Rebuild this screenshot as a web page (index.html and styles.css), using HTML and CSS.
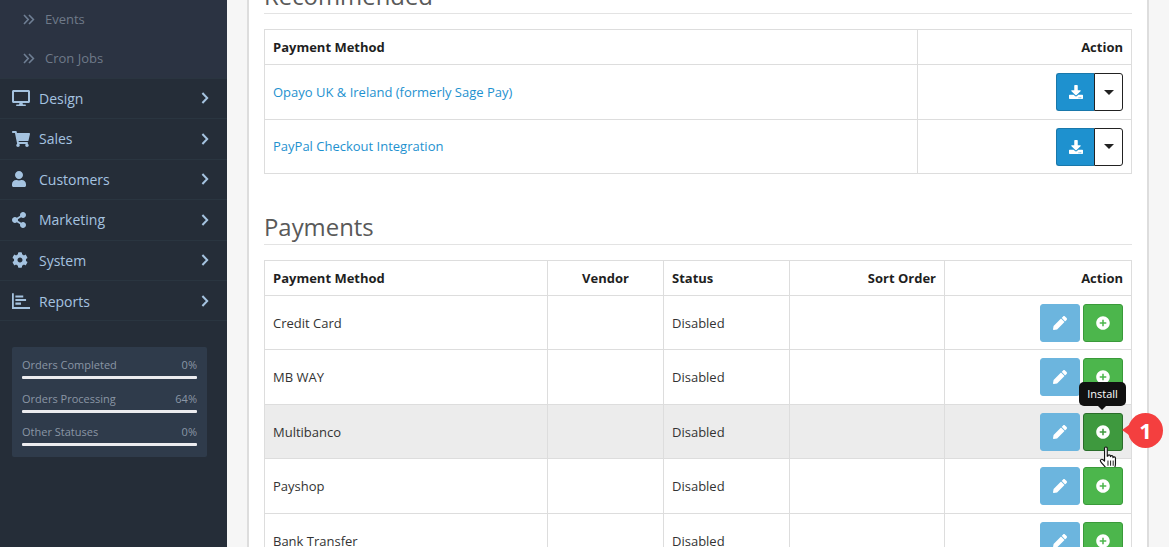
FILE: index.html
```html
<!DOCTYPE html>
<html lang="en">
<head>
<meta charset="utf-8">
<title>Payments</title>
<link rel="stylesheet" href="styles.css">
</head>
<body>
<svg class="defs" width="0" height="0" aria-hidden="true">
  <symbol id="i-desktop" viewBox="0 0 576 512" preserveAspectRatio="xMinYMid meet"><path d="M528 0H48C21.5 0 0 21.5 0 48v320c0 26.5 21.5 48 48 48h192l-16 48h-72c-13.3 0-24 10.7-24 24s10.7 24 24 24h272c13.3 0 24-10.7 24-24s-10.7-24-24-24h-72l-16-48h192c26.5 0 48-21.5 48-48V48c0-26.5-21.5-48-48-48zm-16 352H64V64h448v288z"/></symbol>
  <symbol id="i-cart" viewBox="0 0 576 512" preserveAspectRatio="xMinYMid meet"><path d="M528.12 301.319l47.273-208C578.806 78.301 567.391 64 551.99 64H159.208l-9.166-44.81C147.758 8.021 137.93 0 126.529 0H24C10.745 0 0 10.745 0 24v16c0 13.255 10.745 24 24 24h69.883l70.248 343.435C147.325 417.1 136 435.222 136 456c0 30.928 25.072 56 56 56s56-25.072 56-56c0-15.674-6.447-29.835-16.824-40h209.647C430.447 426.165 424 440.326 424 456c0 30.928 25.072 56 56 56s56-25.072 56-56c0-22.172-12.888-41.332-31.579-50.405l5.517-24.276c3.413-15.018-8.002-29.319-23.403-29.319H218.117l-6.545-32h293.145c11.206 0 20.92-7.754 23.403-18.681z"/></symbol>
  <symbol id="i-user" viewBox="0 0 448 512" preserveAspectRatio="xMinYMid meet"><path d="M224 256c70.7 0 128-57.3 128-128S294.7 0 224 0 96 57.3 96 128s57.3 128 128 128zm89.6 32h-16.7c-22.2 10.2-46.9 16-72.9 16s-50.6-5.8-72.9-16h-16.7C60.2 288 0 348.2 0 422.4V464c0 26.5 21.5 48 48 48h352c26.5 0 48-21.5 48-48v-41.6c0-74.2-60.2-134.4-134.4-134.4z"/></symbol>
  <symbol id="i-share" viewBox="0 0 448 512" preserveAspectRatio="xMinYMid meet"><path d="M352 320c-22.608 0-43.387 7.819-59.79 20.895l-102.486-64.054a96.551 96.551 0 0 0 0-41.683l102.486-64.054C308.613 184.181 329.392 192 352 192c53.019 0 96-42.981 96-96S405.019 0 352 0s-96 42.981-96 96c0 7.158.79 14.13 2.276 20.841L155.79 180.895C139.387 167.819 118.608 160 96 160c-53.019 0-96 42.981-96 96s42.981 96 96 96c22.608 0 43.387-7.819 59.79-20.895l102.486 64.054A96.301 96.301 0 0 0 256 416c0 53.019 42.981 96 96 96s96-42.981 96-96-42.981-96-96-96z"/></symbol>
  <symbol id="i-cog" viewBox="0 0 512 512" preserveAspectRatio="xMinYMid meet"><path d="M487.4 315.7l-42.6-24.6c4.3-23.2 4.3-47 0-70.2l42.6-24.6c4.9-2.8 7.1-8.6 5.5-14-11.1-35.6-30-67.8-54.7-94.6-3.8-4.1-10-5.1-14.8-2.3L380.8 110c-17.9-15.4-38.5-27.3-60.8-35.1V25.8c0-5.6-3.9-10.5-9.4-11.7-36.7-8.2-74.3-7.8-109.2 0-5.5 1.2-9.4 6.1-9.4 11.7V75c-22.2 7.9-42.8 19.8-60.8 35.1L88.7 85.5c-4.9-2.8-11-1.9-14.8 2.3-24.7 26.7-43.6 58.9-54.7 94.6-1.7 5.4.6 11.2 5.5 14L67.3 221c-4.3 23.2-4.3 47 0 70.2l-42.6 24.6c-4.9 2.8-7.1 8.6-5.5 14 11.1 35.6 30 67.8 54.7 94.6 3.8 4.1 10 5.1 14.8 2.3l42.6-24.6c17.9 15.4 38.5 27.3 60.8 35.1v49.2c0 5.6 3.9 10.5 9.4 11.7 36.7 8.2 74.3 7.8 109.2 0 5.5-1.2 9.4-6.1 9.4-11.7v-49.2c22.2-7.9 42.8-19.8 60.8-35.1l42.6 24.6c4.9 2.8 11 1.9 14.8-2.3 24.7-26.7 43.6-58.9 54.7-94.6 1.5-5.5-.7-11.3-5.6-14.1zM256 336c-44.1 0-80-35.9-80-80s35.9-80 80-80 80 35.9 80 80-35.9 80-80 80z"/></symbol>
  <symbol id="i-chart" viewBox="0 0 16 14" preserveAspectRatio="xMinYMid meet"><path d="M0 0h1.6v12.4H16V14H0zM3 2h7v1.9H3zM3 5.2h9.5v1.9H3zM3 8.4h5v1.9H3z"/></symbol>
  <symbol id="i-chev" viewBox="0 0 8 12"><path d="M1.4 1 6.2 6 1.4 11" fill="none" stroke="currentColor" stroke-width="2"/></symbol>
  <symbol id="i-dchev" viewBox="0 0 12 11"><path d="M1 1l4.2 4.5L1 10M6 1l4.4 4.5L6 10" fill="none" stroke="currentColor" stroke-width="1.6"/></symbol>
  <symbol id="i-down" viewBox="0 0 512 512"><path d="M216 0h80c13.3 0 24 10.7 24 24v168h87.7c17.8 0 26.7 21.5 14.1 34.1L269.7 378.3c-7.5 7.5-19.8 7.5-27.3 0L90.1 226.1c-12.6-12.6-3.7-34.1 14.1-34.1H192V24c0-13.3 10.7-24 24-24zm296 376v112c0 13.3-10.7 24-24 24H24c-13.3 0-24-10.7-24-24V376c0-13.3 10.7-24 24-24h146.7l49 49c20.1 20.1 52.5 20.1 72.6 0l49-49H488c13.3 0 24 10.7 24 24zm-124 88c0-11-9-20-20-20s-20 9-20 20 9 20 20 20 20-9 20-20zm64 0c0-11-9-20-20-20s-20 9-20 20 9 20 20 20 20-9 20-20z"/></symbol>
  <symbol id="i-pencil" viewBox="0 0 512 512"><path d="M497.9 142.1l-46.1 46.1c-4.7 4.7-12.3 4.7-17 0l-111-111c-4.7-4.7-4.7-12.3 0-17l46.1-46.1c18.7-18.7 49.1-18.7 67.9 0l60.1 60.1c18.8 18.7 18.8 49.1 0 67.9zM284.2 99.8L21.6 362.4.4 483.9c-2.9 16.4 11.4 30.6 27.8 27.8l121.5-21.3 262.6-262.6c4.7-4.7 4.7-12.3 0-17l-111-111c-4.8-4.7-12.4-4.7-17.1 0z"/></symbol>
  <symbol id="i-plus" viewBox="0 0 512 512"><path fill-rule="evenodd" d="M256 8C119 8 8 119 8 256s111 248 248 248 248-111 248-248S393 8 256 8zm28 128h-56v92h-92v56h92v92h56v-92h92v-56h-92z"/></symbol>
</svg>

<div class="page">
  <nav class="sidebar">
    <ul class="submenu">
      <li class="subitem"><svg class="dchev"><use href="#i-dchev"/></svg>Events</li>
      <li class="subitem"><svg class="dchev"><use href="#i-dchev"/></svg>Cron Jobs</li>
    </ul>
    <ul class="menu">
      <li class="item"><svg class="ico"><use href="#i-desktop"/></svg><span class="label">Design</span><svg class="chev"><use href="#i-chev"/></svg></li>
      <li class="item"><svg class="ico"><use href="#i-cart"/></svg><span class="label">Sales</span><svg class="chev"><use href="#i-chev"/></svg></li>
      <li class="item"><svg class="ico"><use href="#i-user"/></svg><span class="label">Customers</span><svg class="chev"><use href="#i-chev"/></svg></li>
      <li class="item"><svg class="ico"><use href="#i-share"/></svg><span class="label">Marketing</span><svg class="chev"><use href="#i-chev"/></svg></li>
      <li class="item"><svg class="ico"><use href="#i-cog"/></svg><span class="label">System</span><svg class="chev"><use href="#i-chev"/></svg></li>
      <li class="item"><svg class="ico"><use href="#i-chart"/></svg><span class="label">Reports</span><svg class="chev"><use href="#i-chev"/></svg></li>
    </ul>
    <div class="stats">
      <div class="stat"><div class="stat-row"><span>Orders Completed</span><span>0%</span></div><div class="bar"></div></div>
      <div class="stat"><div class="stat-row"><span>Orders Processing</span><span>64%</span></div><div class="bar"></div></div>
      <div class="stat"><div class="stat-row"><span>Other Statuses</span><span>0%</span></div><div class="bar"></div></div>
    </div>
  </nav>

  <main class="content">
    <section class="panel">
      <h2 class="heading">Recommended</h2>
      <table class="grid grid-rec">
        <colgroup><col class="c-rec-name"><col></colgroup>
        <thead><tr><th>Payment Method</th><th class="right">Action</th></tr></thead>
        <tbody>
          <tr>
            <td><a class="link">Opayo UK &amp; Ireland (formerly Sage Pay)</a></td>
            <td class="right"><span class="split"><span class="btn btn-blue"><svg class="bi-down"><use href="#i-down"/></svg></span><span class="btn btn-caret"><span class="caret"></span></span></span></td>
          </tr>
          <tr>
            <td class="nudge"><a class="link">PayPal Checkout Integration</a></td>
            <td class="right"><span class="split"><span class="btn btn-blue"><svg class="bi-down"><use href="#i-down"/></svg></span><span class="btn btn-caret"><span class="caret"></span></span></span></td>
          </tr>
        </tbody>
      </table>

      <h2 class="heading heading-next">Payments</h2>
      <table class="grid grid-pay">
        <colgroup><col class="c-name"><col class="c-vendor"><col class="c-status"><col class="c-sort"><col></colgroup>
        <thead><tr><th>Payment Method</th><th class="center">Vendor</th><th>Status</th><th class="right">Sort Order</th><th class="right">Action</th></tr></thead>
        <tbody>
          <tr><td>Credit Card</td><td></td><td>Disabled</td><td></td><td class="right"><span class="acts"><span class="btn btn-edit"><svg class="bi"><use href="#i-pencil"/></svg></span><span class="btn btn-green"><svg class="bi"><use href="#i-plus"/></svg></span></span></td></tr>
          <tr><td>MB WAY</td><td></td><td>Disabled</td><td></td><td class="right"><span class="acts"><span class="btn btn-edit"><svg class="bi"><use href="#i-pencil"/></svg></span><span class="btn btn-green"><svg class="bi"><use href="#i-plus"/></svg></span></span></td></tr>
          <tr class="hover"><td>Multibanco</td><td></td><td>Disabled</td><td></td><td class="right"><span class="acts"><span class="btn btn-edit"><svg class="bi"><use href="#i-pencil"/></svg></span><span class="btn btn-green btn-active"><svg class="bi"><use href="#i-plus"/></svg>
            <span class="tooltip">Install</span>
            <span class="badge">1</span>
            <svg class="hand" viewBox="0 0 18 25"><path d="M5.2 2.2c0-1.6 2.6-1.6 2.6 0v7.6l.6-.1c0-1.6 2.3-1.6 2.4 0l.1.5c.1-1.4 2.3-1.3 2.4.2v.8c.3-1.2 2.3-1 2.4.4v5.6c0 1.5-.4 2.8-1 4.2v2.4H6.8v-2.2c-1.4-2-3.6-4.3-5.3-6.6-1.1-1.5.8-3 2.3-1.8l1.4 1.3z" fill="#fff" stroke="#111" stroke-width="1.1" stroke-linejoin="round"/><path d="M8.5 14v5M11 14v5M13.5 14v5" stroke="#111" stroke-width=".9"/></svg>
          </span></span></td></tr>
          <tr><td>Payshop</td><td></td><td>Disabled</td><td></td><td class="right"><span class="acts"><span class="btn btn-edit"><svg class="bi"><use href="#i-pencil"/></svg></span><span class="btn btn-green"><svg class="bi"><use href="#i-plus"/></svg></span></span></td></tr>
          <tr><td>Bank Transfer</td><td></td><td>Disabled</td><td></td><td class="right"><span class="acts"><span class="btn btn-edit"><svg class="bi"><use href="#i-pencil"/></svg></span><span class="btn btn-green"><svg class="bi"><use href="#i-plus"/></svg></span></span></td></tr>
        </tbody>
      </table>
    </section>
  </main>
</div>
</body>
</html>
```

FILE: styles.css
```css
* { box-sizing: border-box; }
html, body { margin: 0; padding: 0; height: 100%; overflow: hidden; }
body { font-family: "Open Sans", "Noto Sans", sans-serif; font-size: 13px; color: #333; background: #f6f6f6; }
.defs { position: absolute; }
.page { display: flex; height: 547px; overflow: hidden; }

/* sidebar */
.sidebar { flex: 0 0 227px; background: #252d38; height: 547px; }
.submenu, .menu { list-style: none; margin: 0; padding: 0; }
.submenu { background: #2b3342; }
.subitem { height: 38.8px; display: flex; align-items: center; padding-left: 23px; font-size: 13px; color: #6f7a89; }
.dchev { width: 12px; height: 11px; margin-right: 10px; color: #6f7f94; }
.item { height: 40.5px; display: flex; align-items: center; padding: 0 18px 0 12px; border-top: 1px solid #2a3540; color: #a5c3e0; fill: #a5c3e0; font-size: 14px; }
.ico { width: 18px; height: 16px; margin-right: 9px; flex: none; }
.label { flex: 1; }
.chev { width: 8px; height: 12px; color: #a5c3e0; }
.menu .item:last-child { border-bottom: 1px solid #2a3540; height: 41px; padding-top: 1px; }
.stats { margin: 26px 20px 0 12px; width: 195px; height: 110px; padding: 10px 10px 0; background: #2f3b4b; border-radius: 2px; font-size: 11px; color: #8a96a5; }
.stat { height: 33.5px; }
.stat-row { display: flex; justify-content: space-between; line-height: 16px; height: 19px; }
.bar { height: 3px; background: #ececef; border-radius: 1px; }

/* content */
.content { flex: 1; padding: 0 20px; min-width: 0; }
.panel { margin-top: -40px; height: 700px; padding: 20px 15px 0; background: #fff; border: 0 solid #ddd; border-width: 0 2px; }
.heading { margin: 0 0 15px; height: 34px; font-size: 23.9px; line-height: 32px; font-weight: 400; color: #595959; border-bottom: 1px solid #e3e3e3; }
.heading-next { margin-top: 37px; }

.grid { width: 100%; border-collapse: collapse; table-layout: fixed; font-size: 13px; color: #333; }
.grid th, .grid td { border: 1px solid #ddd; padding: 0 8px; text-align: left; vertical-align: middle; }
.grid th { height: 35px; font-weight: 700; color: #1f1f1f; }
.grid-rec tr:nth-child(odd) td { height: 55px; }
.grid-rec tr:nth-child(even) td { height: 54px; }
.grid-rec td.nudge { padding-bottom: 1px; }
.grid-pay tr:nth-child(odd) td { height: 54px; }
.grid-pay tr:nth-child(even) td { height: 55px; }
.grid .right { text-align: right; }
.grid .center { text-align: center; }
.c-rec-name { width: 653px; }
.c-name { width: 283px; }
.c-vendor { width: 116px; }
.c-status { width: 126px; }
.c-sort { width: 155px; }
.link { color: #1e91cf; }
.hover td { background: #ececec; }

/* buttons */
.split, .acts { display: inline-flex; vertical-align: middle; }
.acts { gap: 3px; }
.btn { display: flex; align-items: center; justify-content: center; height: 38px; border-radius: 3px; border: 1px solid transparent; fill: #fff; }
.btn-blue { width: 38px; background: #1e91cf; border-color: #1978ab; border-right: 0; border-radius: 3px 0 0 3px; }
.btn-caret { width: 29px; background: #fff; border-color: #222; border-radius: 0 3px 3px 0; }
.caret { width: 0; height: 0; border: 5px solid transparent; border-top-color: #222; border-bottom: 0; }
.btn-edit { width: 40px; background: #6cb5de; border-color: #6cb5de; }
.btn-green { width: 40px; background: #4cb64c; border-color: #3a9a3a; position: relative; }
.btn-active { background: #3e993e; border-color: #2a6d2a; }
.bi { width: 14px; height: 14px; }
.bi-down { width: 14px; height: 14px; }

/* overlays */
.tooltip { position: absolute; left: -5px; top: -32px; width: 47px; height: 24px; display: flex; align-items: center; justify-content: center; background: #111; color: #fff; border-radius: 5px; font-size: 11px; }
.tooltip::after { content: ""; position: absolute; left: 19px; bottom: -4px; border: 4px solid transparent; border-top-color: #111; border-bottom: 0; }
.badge { position: absolute; left: 44px; top: -1px; width: 35px; height: 35px; border-radius: 50%; background: #f43f3f; color: #fff; font-size: 22px; font-weight: 700; display: flex; align-items: center; justify-content: center; }
.badge::before { content: ""; position: absolute; left: -6px; top: 12.5px; border-style: solid; border-width: 5px 7px 5px 0; border-color: transparent #f43f3f transparent transparent; }
.hand { position: absolute; left: 15px; top: 32px; width: 19px; height: 26px; }
```
